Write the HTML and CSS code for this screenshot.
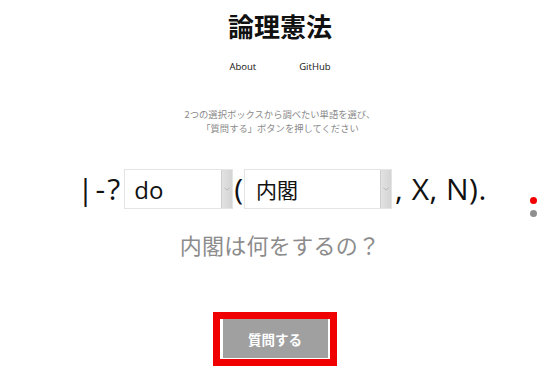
FILE: index.html
```html
<!DOCTYPE html>
<html lang="ja">
<head>
<meta charset="utf-8">
<title>論理憲法</title>
<link rel="stylesheet" href="styles.css">
</head>
<body>
<header class="header">
  <h1 class="title">論理憲法</h1>
  <nav class="nav">
    <a class="nav-link" href="#">About</a>
    <a class="nav-link" href="#">GitHub</a>
  </nav>
</header>
<main class="main">
  <p class="lead">2つの選択ボックスから調べたい単語を選び、<br>「質問する」ボタンを押してください</p>
  <div class="query">
    <span class="token token-start">|-?</span>
    <span class="sel sel-verb">
      <span class="sel-value">do</span>
      <span class="sel-btn"><svg width="6" height="4" viewBox="0 0 6 4"><path d="M0.5 0.8 L3 3 L5.5 0.8" fill="none" stroke="#b8b8b8" stroke-width="1"/></svg></span>
    </span>
    <span class="token token-paren">(</span>
    <span class="sel sel-noun">
      <span class="sel-value">内閣</span>
      <span class="sel-btn"><svg width="6" height="4" viewBox="0 0 6 4"><path d="M0.5 0.8 L3 3 L5.5 0.8" fill="none" stroke="#b8b8b8" stroke-width="1"/></svg></span>
    </span>
    <span class="token token-end">, X, N).</span>
  </div>
  <p class="question">内閣は何をするの？</p>
  <div class="action">
    <button class="ask" type="button">質問する</button>
  </div>
</main>
<div class="dots">
  <span class="dot dot-active"></span>
  <span class="dot"></span>
</div>
</body>
</html>
```
FILE: styles.css
```css
html, body {
  margin: 0;
  padding: 0;
  background: #ffffff;
}
body {
  font-family: "Open Sans", "Noto Sans CJK JP", sans-serif;
  color: #111;
  width: 560px;
  height: 391px;
  overflow: hidden;
  position: relative;
}
.header {
  display: flex;
  flex-direction: column;
  align-items: center;
  padding-top: 7px;
}
.title {
  margin: 0;
  font-family: "Noto Sans CJK JP", sans-serif;
  font-weight: 700;
  font-size: 26px;
  line-height: 38px;
  color: #111;
}
.nav {
  display: flex;
  gap: 43px;
  margin-top: 15px;
}
.nav-link {
  font-size: 9.5px;
  line-height: 14px;
  color: #111;
  text-decoration: none;
}
.main {
  display: flex;
  flex-direction: column;
  align-items: center;
}
.lead {
  margin: 33px 0 0;
  font-family: "Noto Sans CJK JP", sans-serif;
  font-size: 9.3px;
  line-height: 14px;
  color: #8a8a8a;
  text-align: center;
}
.query {
  display: flex;
  align-items: center;
  justify-content: center;
  margin-top: 34px;
  margin-left: 4px;
  height: 40px;
}
.token {
  font-size: 30px;
  line-height: 40px;
  color: #111;
}
.token-start { margin-right: 2px; letter-spacing: 2px; }
.token-paren { margin: 0 1px 0 1px; }
.token-end { margin-left: 3px; letter-spacing: 0.5px; }
.sel {
  display: flex;
  align-items: stretch;
  height: 40px;
  box-sizing: border-box;
  border: 1px solid #e4e4e4;
  background: #fff;
}
.sel-verb { width: 109px; }
.sel-noun { width: 148px; }
.sel-value {
  flex: 1;
  display: flex;
  align-items: center;
  padding-left: 9px;
  font-size: 24px;
  color: #111;
}
.sel-noun .sel-value {
  padding-left: 11px;
  font-family: "Noto Sans CJK JP", sans-serif;
  font-size: 21px;
}
.sel-btn {
  width: 10px;
  display: flex;
  align-items: center;
  justify-content: center;
  background: linear-gradient(to right, #e2e2e2, #d4d4d4);
  border-left: 1px solid #cfcfcf;
}
.question {
  margin: 20px 0 0;
  font-family: "Noto Sans CJK JP", sans-serif;
  font-size: 22px;
  line-height: 30px;
  color: #8c8c8c;
  letter-spacing: 0.3px;
}
.action {
  margin: 53px 11px 0 0;
  border: 7px solid #f00000;
  padding: 0 2px 1px 3px;
  display: flex;
}
.ask {
  width: 105px;
  height: 39px;
  border: none;
  background: #a0a0a0;
  color: #fff;
  font-family: "Noto Sans CJK JP", sans-serif;
  font-weight: 700;
  font-size: 13.5px;
  padding: 0;
}
.dots {
  position: absolute;
  left: 530px;
  top: 197px;
  display: flex;
  flex-direction: column;
  gap: 6px;
}
.dot {
  width: 7px;
  height: 7px;
  border-radius: 50%;
  background: #8f8f8f;
}
.dot-active {
  background: #f20000;
}
```
